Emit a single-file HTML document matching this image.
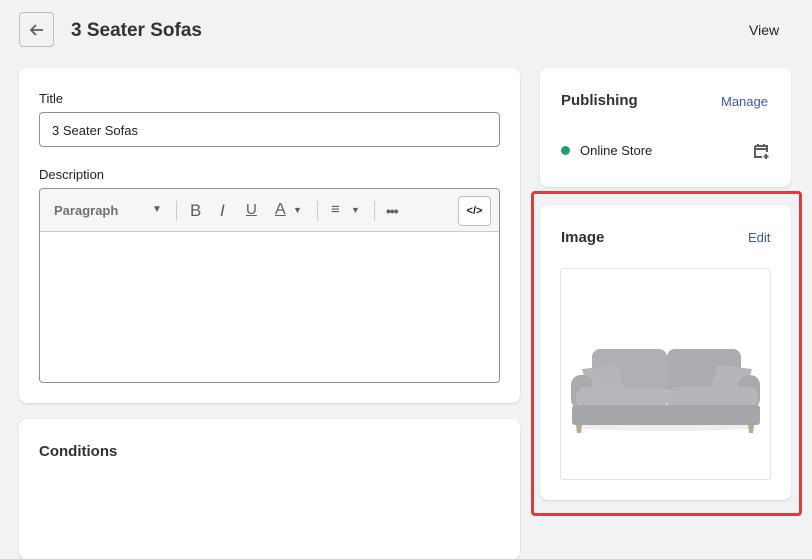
<!DOCTYPE html>
<html><head><meta charset="utf-8"><style>
*{box-sizing:border-box;margin:0;padding:0}
body{width:812px;height:539px;overflow:hidden;background:#f1f2f4;font-family:"Liberation Sans",sans-serif;color:#202223;position:relative}
.abs{position:absolute}
.card{position:absolute;background:#fff;border-radius:8px;box-shadow:0 1px 2px rgba(0,0,0,.12)}
.lbl{font-size:13px;color:#202223}
.h{font-size:15px;font-weight:bold;color:#303234}
.link{font-size:13px;color:#3b59a8}
</style></head><body>
<div class="abs" style="left:19px;top:12px;width:35px;height:35px;border:1px solid #babfc3;border-radius:4px;"></div>
<svg class="abs" style="left:27px;top:20px" width="20" height="20" viewBox="0 0 20 20"><path d="M16 10H4M9 5L4 10l5 5" stroke="#5c5f62" stroke-width="1.8" fill="none"/></svg>
<div class="abs" style="left:71px;top:20px;font-size:19px;font-weight:bold;color:#303234">3 Seater Sofas</div>
<div class="abs" style="left:749px;top:22px;font-size:14px;color:#202223">View</div>

<div class="card" style="left:19px;top:68px;width:501px;height:335px">
  <div class="abs lbl" style="left:20px;top:23px">Title</div>
  <div class="abs" style="left:20px;top:44px;width:461px;height:35px;border:1px solid #8c9196;border-radius:4px;padding:10px 12px;font-size:13px">3 Seater Sofas</div>
  <div class="abs lbl" style="left:20px;top:99px">Description</div>
  <div class="abs" style="left:20px;top:120px;width:461px;height:195px;border:1px solid #8c9196;border-radius:4px;overflow:hidden">
    <div style="height:43px;background:#f6f6f7;border-bottom:1px solid #c9cccf;position:relative;font-size:13px;color:#5c5f62">
      <span class="abs" style="left:14px;top:14px;font-weight:bold;color:#6d7175">Paragraph</span>
      <span class="abs" style="left:112px;top:15px;font-size:10px">▼</span>
      <span class="abs" style="left:136px;top:12px;width:1px;height:20px;background:#c9cccf"></span>
      <span class="abs" style="left:150px;top:12px;font-size:17px">B</span>
      <span class="abs" style="left:180px;top:12px;font-size:17px;font-style:italic">I</span>
      <span class="abs" style="left:206px;top:12px;font-size:15px;text-decoration:underline">U</span>
      <span class="abs" style="left:235px;top:12px;font-size:16px;text-decoration:underline">A</span>
      <span class="abs" style="left:253px;top:16px;font-size:9px">▼</span>
      <span class="abs" style="left:277px;top:12px;width:1px;height:20px;background:#c9cccf"></span>
      <span class="abs" style="left:291px;top:12px;font-size:15px">≡</span>
      <span class="abs" style="left:311px;top:16px;font-size:9px">▼</span>
      <span class="abs" style="left:334px;top:12px;width:1px;height:20px;background:#c9cccf"></span>
      <span class="abs" style="left:346px;top:14px;font-size:14px;font-weight:bold;letter-spacing:-1px">•••</span>
      <span class="abs" style="left:418px;top:7px;width:33px;height:30px;border:1px solid #babfc3;border-radius:4px;background:#fff;font-size:11px;font-weight:bold;text-align:center;line-height:28px;color:#202223">&lt;/&gt;</span>
    </div>
  </div>
</div>
<div class="card" style="left:19px;top:419px;width:501px;height:140px">
  <div class="abs h" style="left:20px;top:24px">Conditions</div>
</div>

<div class="card" style="left:540px;top:68px;width:251px;height:119px">
  <div class="abs h" style="left:21px;top:24px">Publishing</div>
  <div class="abs link" style="left:181px;top:26px">Manage</div>
  <div class="abs" style="left:21px;top:78px;width:9px;height:9px;border-radius:50%;background:#1f9e6f"></div>
  <div class="abs lbl" style="left:40px;top:75px;color:#202223">Online Store</div>
  <svg class="abs" style="left:212px;top:74px" width="18" height="18" viewBox="0 0 18 18"><path d="M3 4h12v6M3 4v11h7M3 7h12M6 2v3M12 2v3M14 12v5M11.5 14.5h5" stroke="#5c5f62" stroke-width="2" fill="none"/></svg>
</div>

<div class="abs" style="left:531px;top:191px;width:271px;height:325px;border:3px solid #dc3b40;border-radius:4px"></div>
<div class="card" style="left:540px;top:205px;width:251px;height:295px">
  <div class="abs h" style="left:21px;top:24px">Image</div>
  <div class="abs link" style="left:208px;top:25px">Edit</div>
  <div class="abs" style="left:20px;top:63px;width:211px;height:212px;border:1px solid #e1e3e5;border-radius:3px"></div>
</div>
<svg class="abs" style="left:568px;top:345px" width="196" height="92" viewBox="0 0 196 92">
  <ellipse cx="98" cy="82" rx="90" ry="4" fill="#eee"/>
  <rect x="24" y="4" width="75" height="48" rx="8" fill="#aeb0b3"/>
  <rect x="99" y="4" width="74" height="48" rx="8" fill="#aaacaf"/>
  <path d="M14 24 L50 20 L58 50 L22 52 Z" fill="#b4b6b9"/>
  <path d="M184 24 L150 20 L140 50 L176 52 Z" fill="#b4b6b9"/>
  <rect x="3" y="30" width="22" height="34" rx="10" fill="#a8aaad"/>
  <rect x="170" y="30" width="22" height="34" rx="10" fill="#a8aaad"/>
  <rect x="8" y="42" width="92" height="22" rx="10" fill="#b5b7ba"/>
  <rect x="98" y="42" width="92" height="22" rx="10" fill="#b3b5b8"/>
  <rect x="4" y="60" width="188" height="20" rx="3" fill="#a4a6a9"/>
  <path d="M8 80h6l-1 8h-4z M180 80h6l-1 8h-4z" fill="#b8a993"/>
</svg>
</body></html>
